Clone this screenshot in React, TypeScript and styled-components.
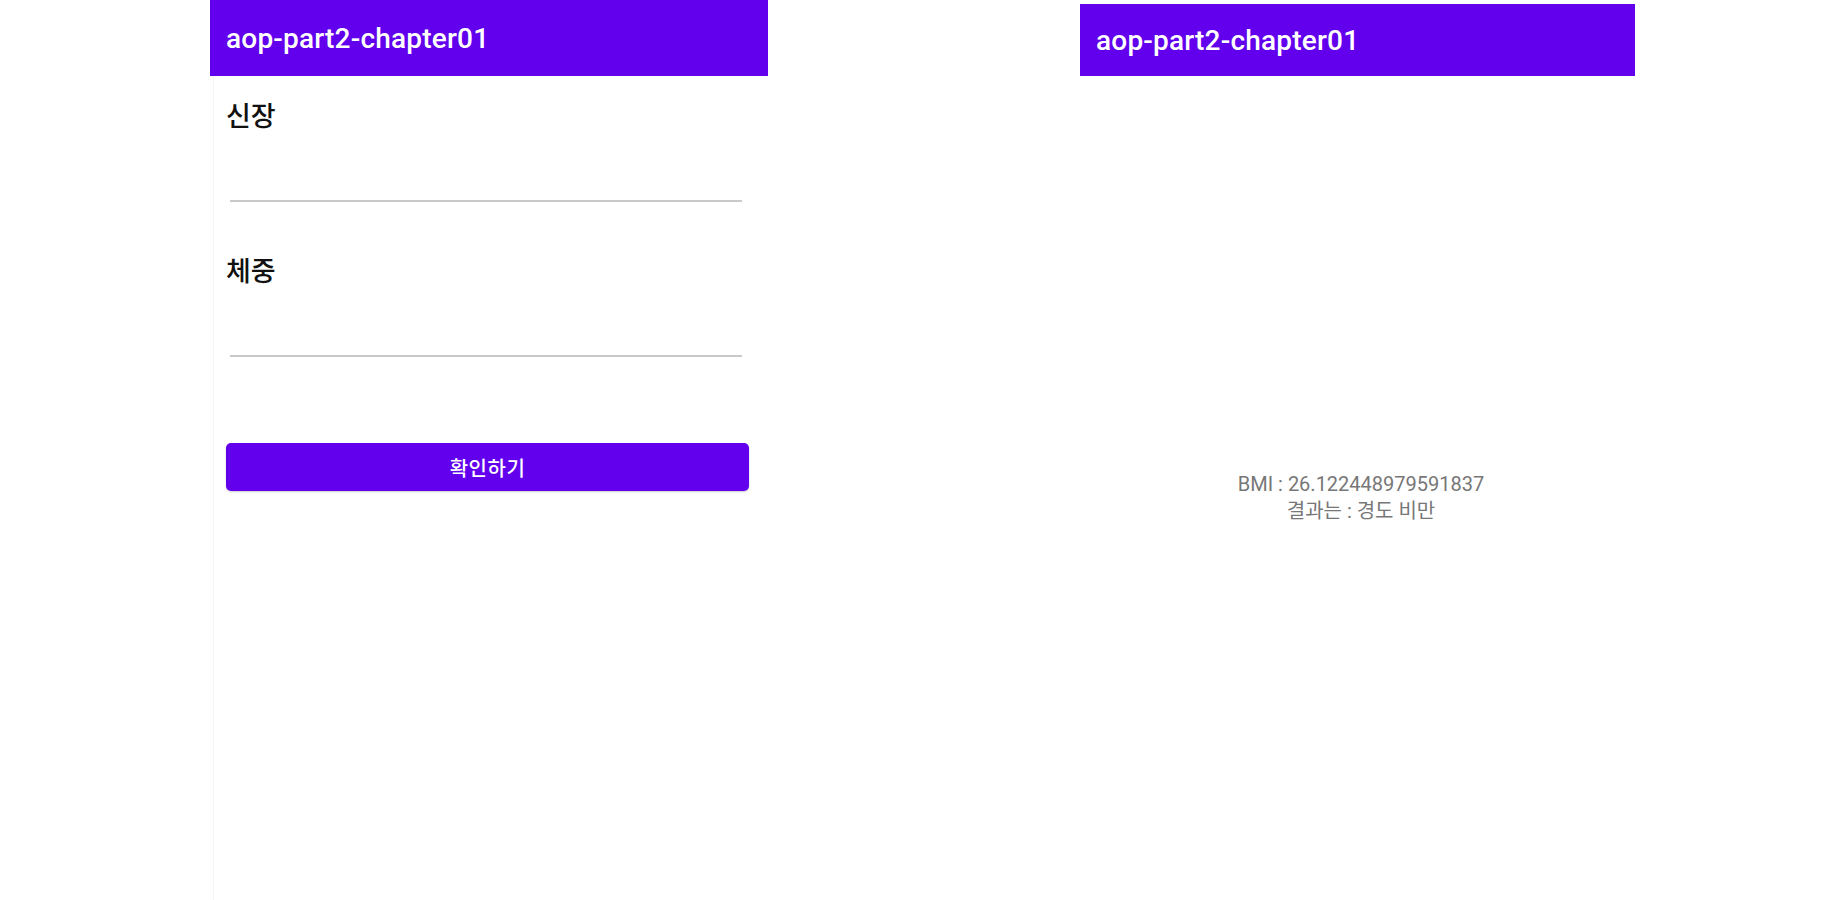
import * as React from 'react';
import styled, { createGlobalStyle } from 'styled-components';

const GlobalStyle = createGlobalStyle`
  html, body {
    margin: 0;
    padding: 0;
    background: #ffffff;
  }
  body {
    font-family: Roboto, "Noto Sans CJK KR", sans-serif;
  }
`;

const Page = styled.div`
  display: flex;
  align-items: flex-start;
  gap: 312px;
  padding-left: 210px;
  height: 900px;
  overflow: hidden;
`;

const Screen = styled.div<{ $width: number; $top: number }>`
  width: ${(p) => p.$width}px;
  margin-top: ${(p) => p.$top}px;
  display: flex;
  flex-direction: column;
`;

const AppBar = styled.div<{ $height: number }>`
  height: ${(p) => p.$height}px;
  background: #6200ee;
  color: #ffffff;
  display: flex;
  align-items: center;
  padding-left: 16px;
  font-family: Roboto, "Noto Sans CJK KR", sans-serif;
  font-weight: 500;
  font-size: 28px;
  letter-spacing: 0.2px;
`;

const Form = styled.div`
  display: flex;
  flex-direction: column;
  margin-left: 3px;
  border-left: 1px solid #f5f5f5;
  padding: 21px 19px 0 12px;
  height: 824px;
  box-sizing: border-box;
`;

const Label = styled.div<{ $gap?: number }>`
  margin-top: ${(p) => p.$gap ?? 0}px;
  height: 36px;
  line-height: 36px;
  font-family: "Noto Sans CJK KR", sans-serif;
  font-weight: 500;
  font-size: 27px;
  color: #111111;
`;

const Field = styled.div`
  height: 67px;
  margin: 0 7px 0 4px;
  border-bottom: 2px solid #c9c9c9;
`;

const Button = styled.button`
  margin-top: 86px;
  height: 48px;
  border: none;
  border-radius: 5px;
  background: #6200ee;
  color: #ffffff;
  font-family: "Noto Sans CJK KR", sans-serif;
  font-weight: 500;
  font-size: 20px;
  letter-spacing: 0.5px;
  box-shadow: 0 1px 2px rgba(0, 0, 0, 0.2);
  cursor: pointer;
`;

const Result = styled.div`
  height: 824px;
  box-sizing: border-box;
  padding: 19px 0 0 7px;
  display: flex;
  flex-direction: column;
  align-items: center;
  justify-content: center;
`;

const ResultLine = styled.div`
  font-family: Roboto, "Noto Sans CJK KR", sans-serif;
  font-size: 20px;
  line-height: 27px;
  color: #777777;
`;

export default function App() {
  return (
    <>
      <GlobalStyle />
      <Page>
        <Screen $width={558} $top={0}>
          <AppBar $height={76}>aop-part2-chapter01</AppBar>
          <Form>
            <Label>신장</Label>
            <Field />
            <Label $gap={50}>체중</Label>
            <Field />
            <Button>확인하기</Button>
          </Form>
        </Screen>
        <Screen $width={555} $top={4}>
          <AppBar $height={72}>aop-part2-chapter01</AppBar>
          <Result>
            <ResultLine>BMI : 26.122448979591837</ResultLine>
            <ResultLine>결과는 : 경도 비만</ResultLine>
          </Result>
        </Screen>
      </Page>
    </>
  );
}
